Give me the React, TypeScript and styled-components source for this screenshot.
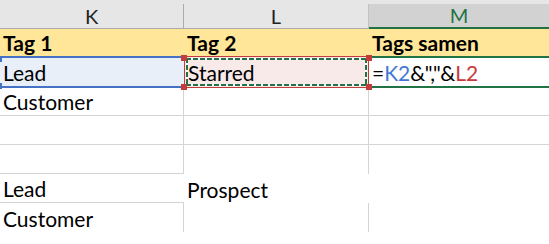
import React from "react";
import styled, { createGlobalStyle } from "styled-components";

const GRID = "#d4d4d4";
const GREEN = "#217346";
const BLUE = "#4472c4";
const RED = "#c43b3b";
const COLS = "184px 185px 1fr";

const GlobalStyle = createGlobalStyle`
  *, *::before, *::after { box-sizing: border-box; }
  html, body { margin: 0; padding: 0; background: #fff; }
  body { font-family: Lato, "Liberation Sans", sans-serif; overflow: hidden; }
`;

const Sheet = styled.div`
  width: 549px;
  height: 244px;
  overflow: hidden;
  background: #fff;
`;

const ColumnBar = styled.div`
  display: grid;
  grid-template-columns: ${COLS};
  align-items: end;
  height: 29px;
  background: #e6e6e6;
`;

const ColumnHead = styled.div<{ $active?: boolean; $divider?: string }>`
  display: flex;
  justify-content: center;
  align-items: flex-end;
  height: 25px;
  padding-bottom: 2px;
  font-size: 20px;
  line-height: 20px;
  color: ${({ $active }) => ($active ? GREEN : "#222")};
  background: ${({ $active }) => ($active ? "#d2d2d2" : "transparent")};
  border-bottom: ${({ $active }) => ($active ? `2px solid ${GREEN}` : "1px solid #ababab")};
  border-right: ${({ $divider }) => ($divider ? `1px solid ${$divider}` : "none")};
`;

const Row = styled.div<{ $h: number }>`
  display: grid;
  grid-template-columns: ${COLS};
  height: ${({ $h }) => $h}px;
`;

const Cell = styled.div<{ $right?: boolean; $bottom?: boolean; $bg?: string; $bold?: boolean }>`
  display: flex;
  align-items: flex-end;
  padding: 0 3px 3px;
  font-size: 21px;
  line-height: 21px;
  font-weight: ${({ $bold }) => ($bold ? 700 : 400)};
  color: #000;
  white-space: nowrap;
  background: ${({ $bg }) => $bg || "transparent"};
  border-right: ${({ $right }) => ($right ? `1px solid ${GRID}` : "none")};
  border-bottom: ${({ $bottom }) => ($bottom ? `1px solid ${GRID}` : "none")};
`;

const RefCell = styled(Cell)`
  position: relative;
  background: #e8eff9;
  border-top: 2px solid ${BLUE};
  border-bottom: 2px solid ${BLUE};
`;

const CopyCell = styled(Cell)`
  position: relative;
  background: #f9eaea;
  border: 1px solid ${RED};
  padding-bottom: 4px;

  &::after {
    content: "";
    position: absolute;
    inset: 1px;
    background:
      repeating-linear-gradient(90deg, ${GREEN} 0 5px, #fff 5px 7px) top / 100% 2px no-repeat,
      repeating-linear-gradient(90deg, ${GREEN} 0 5px, #fff 5px 7px) bottom / 100% 2px no-repeat,
      repeating-linear-gradient(180deg, ${GREEN} 0 5px, #fff 5px 7px) left / 2px 100% no-repeat,
      repeating-linear-gradient(180deg, ${GREEN} 0 5px, #fff 5px 7px) right / 2px 100% no-repeat;
  }
`;

const ActiveCell = styled(Cell)`
  border-top: 2px solid ${GREEN};
  border-bottom: 2px solid ${GREEN};
  background: #fff;
`;

const Handle = styled.span<{ $color: string; $v: "top" | "bottom"; $h: "left" | "right" }>`
  position: absolute;
  z-index: 2;
  width: 6px;
  height: 6px;
  background: ${({ $color }) => $color};
  ${({ $v }) => ($v === "top" ? "top: -2px;" : "bottom: -3px;")}
  ${({ $h }) => ($h === "left" ? "left: -4px;" : "right: -4px;")}
`;

const Ref = styled.span<{ $color: string }>`
  color: ${({ $color }) => $color};
`;

type Plain = { text?: string; right?: boolean; bottom?: boolean };

const plainRows: { h: number; cells: Plain[] }[] = [
  { h: 28, cells: [{ text: "Customer", right: true, bottom: true }, { right: true, bottom: true }, { bottom: true }] },
  { h: 29, cells: [{ right: true, bottom: true }, { right: true, bottom: true }, { bottom: true }] },
  { h: 29, cells: [{ right: true, bottom: true }, { right: true }, {}] },
  { h: 29, cells: [{ text: "Lead", bottom: true }, { text: "Prospect" }, {}] },
  { h: 29, cells: [{ text: "Customer", right: true }, { right: true }, {}] },
];

const App = () => {
  return (
    <Sheet>
      <GlobalStyle />
      <ColumnBar>
        <ColumnHead $divider="#ababab">K</ColumnHead>
        <ColumnHead $divider="#c2c2c2">L</ColumnHead>
        <ColumnHead $active>M</ColumnHead>
      </ColumnBar>

      <Row $h={27}>
        <Cell $bg="#ffe699" $bold>Tag 1</Cell>
        <Cell $bg="#ffe699" $bold>Tag 2</Cell>
        <Cell $bg="#ffe699" $bold>Tags samen</Cell>
      </Row>

      <Row $h={32}>
        <RefCell>
          Lead
          <Handle $color={BLUE} $v="top" $h="left" />
          <Handle $color={BLUE} $v="bottom" $h="left" />
        </RefCell>
        <CopyCell>
          Starred
          <Handle $color={RED} $v="top" $h="left" />
          <Handle $color={RED} $v="bottom" $h="left" />
          <Handle $color={RED} $v="top" $h="right" />
          <Handle $color={RED} $v="bottom" $h="right" />
        </CopyCell>
        <ActiveCell>
          {"="}
          <Ref $color="#3f78d6">K2</Ref>
          {'&","&'}
          <Ref $color="#c83a3a">L2</Ref>
        </ActiveCell>
      </Row>

      {plainRows.map((row, i) => (
        <Row key={i} $h={row.h}>
          {row.cells.map((c, j) => (
            <Cell key={j} $right={c.right} $bottom={c.bottom}>
              {c.text}
            </Cell>
          ))}
        </Row>
      ))}
    </Sheet>
  );
};

export default App;
